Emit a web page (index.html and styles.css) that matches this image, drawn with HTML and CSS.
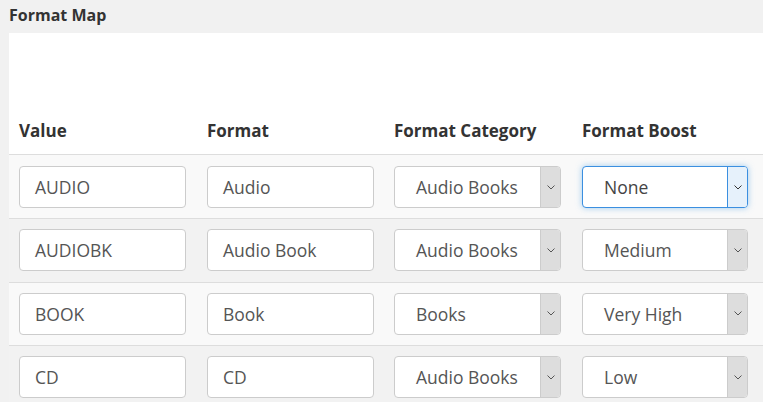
FILE: index.html
```html
<!DOCTYPE html>
<html>
<head>
<meta charset="utf-8">
<link rel="stylesheet" href="styles.css">
</head>
<body>
<h2 class="title">Format Map</h2>
<div class="panel">
  <div class="grid head">
    <div class="th">Value</div>
    <div class="th">Format</div>
    <div class="th">Format Category</div>
    <div class="th">Format Boost</div>
  </div>
  <div class="grid row odd">
    <div class="cell"><div class="input">AUDIO</div></div>
    <div class="cell"><div class="input">Audio</div></div>
    <div class="cell"><div class="select"><span class="val">Audio Books</span><span class="arrow"><svg width="8" height="5" viewBox="0 0 8 5"><path d="M0.5 0.5 L4 4 L7.5 0.5" fill="none" stroke="#555" stroke-width="1"/></svg></span></div></div>
    <div class="cell"><div class="select boost focus"><span class="val">None</span><span class="arrow"><svg width="8" height="5" viewBox="0 0 8 5"><path d="M0.5 0.5 L4 4 L7.5 0.5" fill="none" stroke="#333" stroke-width="1"/></svg></span></div></div>
  </div>
  <div class="grid row even">
    <div class="cell"><div class="input">AUDIOBK</div></div>
    <div class="cell"><div class="input">Audio Book</div></div>
    <div class="cell"><div class="select"><span class="val">Audio Books</span><span class="arrow"><svg width="8" height="5" viewBox="0 0 8 5"><path d="M0.5 0.5 L4 4 L7.5 0.5" fill="none" stroke="#555" stroke-width="1"/></svg></span></div></div>
    <div class="cell"><div class="select boost"><span class="val">Medium</span><span class="arrow"><svg width="8" height="5" viewBox="0 0 8 5"><path d="M0.5 0.5 L4 4 L7.5 0.5" fill="none" stroke="#555" stroke-width="1"/></svg></span></div></div>
  </div>
  <div class="grid row odd">
    <div class="cell"><div class="input">BOOK</div></div>
    <div class="cell"><div class="input">Book</div></div>
    <div class="cell"><div class="select"><span class="val">Books</span><span class="arrow"><svg width="8" height="5" viewBox="0 0 8 5"><path d="M0.5 0.5 L4 4 L7.5 0.5" fill="none" stroke="#555" stroke-width="1"/></svg></span></div></div>
    <div class="cell"><div class="select boost"><span class="val">Very High</span><span class="arrow"><svg width="8" height="5" viewBox="0 0 8 5"><path d="M0.5 0.5 L4 4 L7.5 0.5" fill="none" stroke="#555" stroke-width="1"/></svg></span></div></div>
  </div>
  <div class="grid row even">
    <div class="cell"><div class="input">CD</div></div>
    <div class="cell"><div class="input">CD</div></div>
    <div class="cell"><div class="select"><span class="val">Audio Books</span><span class="arrow"><svg width="8" height="5" viewBox="0 0 8 5"><path d="M0.5 0.5 L4 4 L7.5 0.5" fill="none" stroke="#555" stroke-width="1"/></svg></span></div></div>
    <div class="cell"><div class="select boost"><span class="val">Low</span><span class="arrow"><svg width="8" height="5" viewBox="0 0 8 5"><path d="M0.5 0.5 L4 4 L7.5 0.5" fill="none" stroke="#555" stroke-width="1"/></svg></span></div></div>
  </div>
</div>
</body>
</html>
```
FILE: styles.css
```css
html, body {
  margin: 0;
  padding: 0;
  background: #f1f1f1;
  font-family: "Open Sans", "Liberation Sans", sans-serif;
  color: #333;
  overflow: hidden;
}
body {
  padding-left: 9px;
}
.title {
  margin: 0;
  height: 33px;
  font-size: 16px;
  font-weight: 700;
  line-height: 31px;
  color: #333;
}
.panel {
  background: #fff;
  width: 760px;
  padding-top: 77px;
}
.grid {
  display: grid;
  grid-template-columns: 188px 187px 188px 1fr;
}
.head .th {
  font-size: 17px;
  font-weight: 700;
  line-height: 22px;
  padding: 10px 10px 12px 10px;
  color: #333;
}
.row {
  border-top: 1px solid #dddddd;
}
.row.odd { background: #f9f9f9; }
.row.even { background: #f2f2f2; }
.cell {
  padding: 10px 10px 10.7px 10px;
}
.head + .row .cell { padding-top: 11px; padding-bottom: 10px; }
.input {
  box-sizing: border-box;
  width: 167px;
  height: 42px;
  background: #fff;
  border: 1px solid #cccccc;
  border-radius: 4px;
  padding-left: 15px;
  font-size: 17.5px;
  line-height: 40px;
  color: #555;
  white-space: nowrap;
}
.select {
  box-sizing: border-box;
  width: 167px;
  height: 42px;
  background: #fff;
  border: 1px solid #cccccc;
  border-radius: 4px;
  display: flex;
  align-items: stretch;
  font-size: 17.5px;
  color: #555;
  overflow: hidden;
  white-space: nowrap;
}
.select.boost { width: 166px; }
.select .val {
  flex: 1;
  padding-left: 21px;
  line-height: 40px;
}
.select .arrow {
  width: 19px;
  background: #dddddd;
  border-left: 1px solid #cccccc;
  display: flex;
  align-items: center;
  justify-content: center;
}
.select.focus {
  border-color: #3b8fe0;
  box-shadow: 0 0 6px rgba(102, 175, 233, 0.6);
  color: #444;
}
.select.focus .arrow {
  background: #e6f1fb;
  border-left-color: #3b8fe0;
}
```
